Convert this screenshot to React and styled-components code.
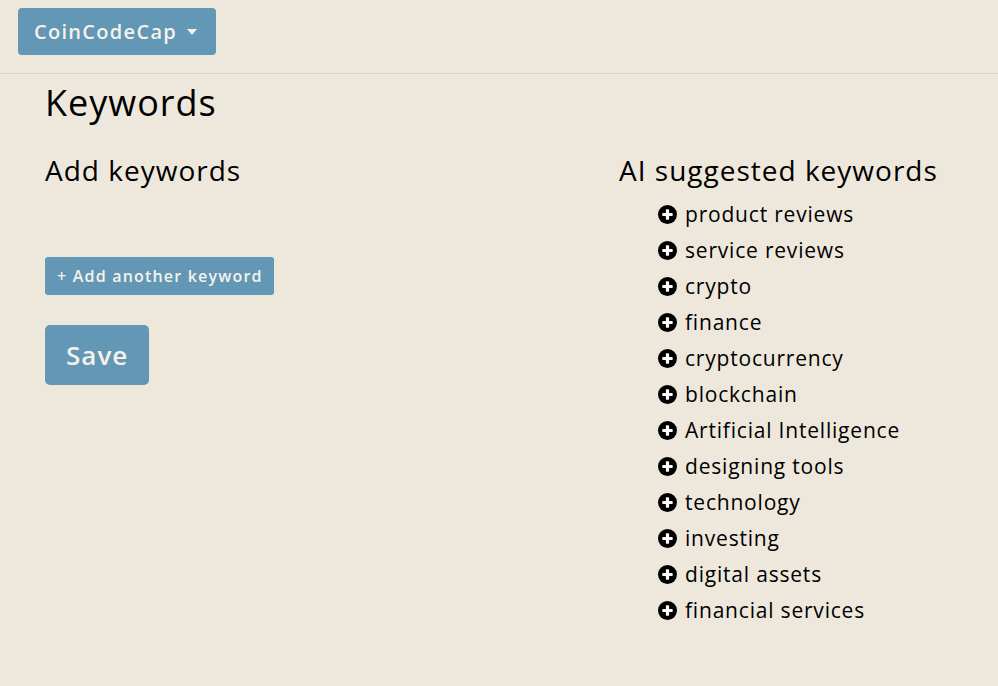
import React from 'react'
import styled, { createGlobalStyle } from 'styled-components'

const GlobalStyle = createGlobalStyle`
    body{
        margin: 0;
        background: #eee8dc;
        font-family: "Open Sans", "Liberation Sans", sans-serif;
        color: #000;
    }
`

const suggestions = [
    'product reviews',
    'service reviews',
    'crypto',
    'finance',
    'cryptocurrency',
    'blockchain',
    'Artificial Intelligence',
    'designing tools',
    'technology',
    'investing',
    'digital assets',
    'financial services',
]

const PlusIcon = () => (
    <svg width="19" height="19" viewBox="0 0 20 20">
        <circle cx="10" cy="10" r="10" fill="#000" />
        <rect x="8.3" y="4.5" width="3.4" height="11" rx="0.8" fill="#fff" />
        <rect x="4.5" y="8.3" width="11" height="3.4" rx="0.8" fill="#fff" />
    </svg>
)

const App = () => {
    return (
        <>
            <GlobalStyle />
            <TopBar>
                <BrandButton>CoinCodeCap<Caret /></BrandButton>
            </TopBar>
            <Main>
                <Title>Keywords</Title>
                <Columns>
                    <div>
                        <SubTitle>Add keywords</SubTitle>
                        <Button size="sm" top={71}>+ Add another keyword</Button>
                        <Button size="lg" top={30}>Save</Button>
                    </div>
                    <div>
                        <SubTitle>AI suggested keywords</SubTitle>
                        <List>
                            {suggestions.map(word => (
                                <li key={word}><PlusIcon />{word}</li>
                            ))}
                        </List>
                    </div>
                </Columns>
            </Main>
        </>
    )
}

//styled components

const TopBar = styled.div`
    height: 74px;
    border-bottom: 1px solid #d8d4cb;
    padding: 8px 18px 0;
    box-sizing: border-box;
`

const BrandButton = styled.button`
    display: flex;
    align-items: center;
    height: 47px;
    width: 198px;
    padding: 0 0 0 16px;
    border: none;
    border-radius: 4px;
    background: #6297b6;
    color: #f6f2ea;
    font-family: inherit;
    font-size: 20px;
    font-weight: 600;
    letter-spacing: 1.3px;
`

const Caret = styled.span`
    margin-left: 10px;
    border-top: 6px solid #f6f2ea;
    border-left: 5px solid transparent;
    border-right: 5px solid transparent;
`

const Main = styled.div`
    padding: 0 45px;
`

const Title = styled.h1`
    margin: 7px 0 0;
    font-size: 36px;
    font-weight: 400;
    line-height: 43px;
    letter-spacing: 1px;
`

const Columns = styled.div`
    display: grid;
    grid-template-columns: 574px 1fr;
    margin-top: 30px;
`

const SubTitle = styled.h3`
    margin: 0;
    font-size: 28px;
    font-weight: 500;
    line-height: 32px;
    letter-spacing: 1px;
`

const Button = styled.button`
    display: block;
    margin-top: ${p => p.top}px;
    border: none;
    border-radius: ${p => (p.size === 'lg' ? 5 : 3)}px;
    background: #6297b6;
    color: #f6f2ea;
    font-family: inherit;
    font-weight: 600;
    height: ${p => (p.size === 'lg' ? 60 : 38)}px;
    padding: ${p => (p.size === 'lg' ? '0 21px' : '0 11px 0 12px')};
    font-size: ${p => (p.size === 'lg' ? 26 : 16)}px;
    letter-spacing: ${p => (p.size === 'lg' ? 1 : 1.2)}px;
`

const List = styled.ul`
    list-style: none;
    margin: 10px 0 0;
    padding-left: 39px;
    li{
        display: flex;
        align-items: center;
        gap: 8px;
        height: 36px;
        font-size: 21px;
        letter-spacing: 0.8px;
    }
`

export default App
